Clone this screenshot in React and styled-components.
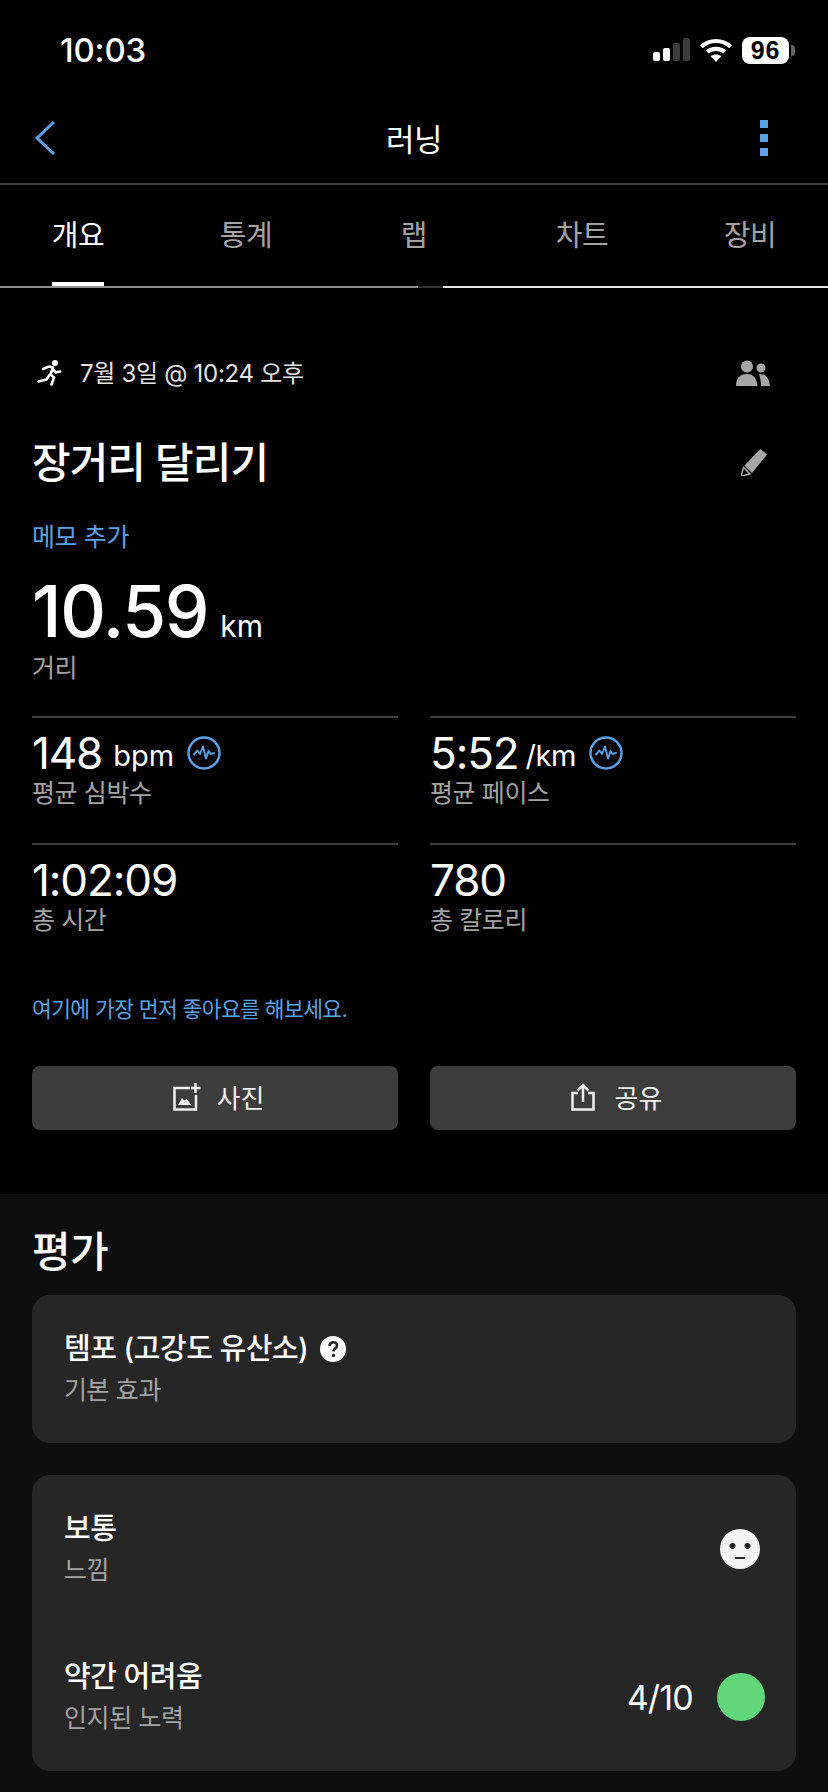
import React from 'react';
import styled, { createGlobalStyle } from 'styled-components';

const Global = createGlobalStyle`
  html, body { margin: 0; padding: 0; background: #000; }
  body { font-family: Inter, "Noto Sans CJK KR", sans-serif; color: #fff; }
  * { box-sizing: border-box; }
`;
const Page = styled.div`width: 828px; height: 1792px; overflow: hidden; background: #000;`;

const StatusBar = styled.div`
  height: 100px; display: flex; align-items: center; justify-content: space-between;
  padding: 0 39px 0 60px;
`;
const Clock = styled.div`font-size: 33px; font-weight: 500; letter-spacing: -0.2px; color: #fff;`;
const StatusIcons = styled.div`display: flex; align-items: center; gap: 9px;`;
const Battery = styled.div`
  position: relative; width: 47px; height: 27px; border-radius: 8px; background: #fff; color: #000;
  font-size: 25px; font-weight: 700; line-height: 27px; text-align: center; font-family: "Liberation Sans", sans-serif;
  letter-spacing: 0.8px;
  &::after { content: ""; position: absolute; right: -6px; top: 8px; width: 4px; height: 11px; border-radius: 0 4px 4px 0; background: #666; }
`;

const NavBar = styled.div`
  height: 85px; display: flex; align-items: center; justify-content: space-between;
  padding: 0 60px 8px; border-bottom: 2px solid #3e3e3e;
`;
const BackIcon = styled.svg`margin-left: -26px; margin-right: 26px;`;
const NavDots = styled.svg`margin-left: 14px;`;
const NavTitle = styled.div`font-size: 31px; font-weight: 400; letter-spacing: -0.5px; color: #fff;`;

const Tabs = styled.div`
  height: 103px; display: grid; grid-template-columns: repeat(5, 168px); margin-left: -6px; width: 840px;
  border-bottom: 2px solid; border-image: linear-gradient(90deg, #8f8f8f 0 50.500%, #333 50.500% 53.500%, #e6e6e6 53.500% 100%) 1;
`;
const Tab = styled.div`
  position: relative; justify-self: center; padding-top: 31px; height: 101px;
  font-size: 29px; line-height: 40px; letter-spacing: -0.4px;
  color: ${p => (p.$active ? '#fff' : '#a3a3a3')};
  ${p => p.$active && `&::after { content: ""; position: absolute; left: 0; right: 0; bottom: 0; height: 4px; background: #fff; }`}
`;

const Overview = styled.section`padding: 65px 32px 64px;`;
const DateRow = styled.div`height: 40px; display: flex; align-items: center; justify-content: space-between; padding-right: 26px;`;
const DateLabel = styled.div`display: flex; align-items: center; gap: 17px; font-size: 24px; letter-spacing: -0.3px; color: #e4e4e4;`;
const DateText = styled.span`margin-top: -4px;`;
const RunnerIcon = styled.svg`margin-left: 3px;`;
const TitleRow = styled.div`height: 56px; margin-top: 41px; display: flex; align-items: center; justify-content: space-between; padding-right: 29px;`;
const Title = styled.h1`margin: -6px 0 0; font-size: 42px; font-weight: 500; letter-spacing: -1px; color: #fff;`;
const Link = styled.div`
  font-size: ${p => p.$size}px; line-height: 34px; color: #5aa2e8; letter-spacing: ${p => p.$track}px; margin-top: ${p => p.$top}px;
`;
const BigValue = styled.div`display: flex; align-items: baseline; height: 70px; line-height: 70px; margin-top: 22px; gap: 12px;`;
const BigNumber = styled.span`font-size: 71px; font-weight: 500; letter-spacing: -1.3px;`;
const BigUnit = styled.span`font-size: 30px;`;
const Caption = styled.div`font-size: 25px; line-height: 32px; letter-spacing: -0.4px; color: #a3a3a3;`;
const BigCaption = styled(Caption)`margin-top: 5px; line-height: 34px;`;
const StatGrid = styled.div`display: grid; grid-template-columns: 366px 366px; column-gap: 32px; margin-top: 31px;`;
const Stat = styled.div`height: 127px; border-top: 2px solid #3e3e3e; padding-top: 11px;`;
const StatValue = styled.div`display: flex; align-items: center; height: 48px; line-height: 48px;`;
const StatNumber = styled.span`font-size: 44px; font-weight: 400; letter-spacing: -1.1px;`;
const StatUnit = styled.span`font-size: 29px; margin-left: ${p => p.$gap}px; margin-top: 6px; letter-spacing: ${p => p.$track}px;`;
const PulseIcon = styled.svg`width: 34px; height: 34px; margin-left: 13px; margin-top: 0;`;
const Buttons = styled.div`display: grid; grid-template-columns: 366px 366px; column-gap: 32px; margin-top: 40px;`;
const ActionButton = styled.div`
  height: 64px; border-radius: 8px; background: #3c3c3c; display: flex; align-items: center; justify-content: center;
  gap: ${p => p.$gap}px; font-size: 26px; color: #f0f0f0; padding: 0 0 3px 7px;
`;

const Rating = styled.section`background: #0e0e0e; padding: 33px 32px 0; height: 598px;`;
const Heading = styled.h2`margin: 0 0 18px; height: 50px; line-height: 50px; font-size: 42px; font-weight: 500; letter-spacing: -0.6px;`;
const Card = styled.div`background: #262626; border-radius: 18px; margin-bottom: 32px; padding: 0 32px;`;
const Row = styled.div`height: 148px; display: flex; align-items: center; justify-content: space-between;`;
const TextBlock = styled.div`padding-bottom: 2px;`;
const RowTitle = styled.div`display: flex; align-items: center; gap: 12px; font-size: 29px; line-height: 36px; font-weight: 500; letter-spacing: -0.5px; margin-bottom: 7px; color: #fff;`;
const RowRight = styled.div`display: flex; align-items: center; gap: 24px;`;
const Score = styled.div`font-size: 34px; letter-spacing: -0.8px;`;
const Dot = styled.div`width: 48px; height: 48px; border-radius: 50%; background: #62d67b; margin-right: -1px;`;
const FaceIcon = styled.svg`margin-right: 4px;`;

const Pulse = () => (
  <PulseIcon viewBox="0 0 34 34" fill="none" stroke="#5aa2e8">
    <circle cx="17" cy="17" r="15.5" strokeWidth="2.4" />
    <path d="M7 18.500l3.500-4 2.500 3.500 3-7.500 3 12 2.500-7.500 2 3 3.500-1" strokeWidth="1.9" strokeLinejoin="round" strokeLinecap="round" />
  </PulseIcon>
);

export default function App() {
  return (
    <Page>
      <Global />
      <StatusBar>
        <Clock>10:03</Clock>
        <StatusIcons>
          <svg width="37" height="24" viewBox="0 0 37 24">
            <rect x="0" y="14" width="7" height="9" rx="2" fill="#fff" />
            <rect x="10" y="10" width="7" height="13" rx="2" fill="#fff" />
            <rect x="20" y="5" width="7" height="18" rx="2" fill="#3c3c3c" />
            <rect x="30" y="0" width="7" height="23" rx="2" fill="#3c3c3c" />
          </svg>
          <svg width="34" height="25" viewBox="0 0 32 24" fill="none" stroke="#fff" strokeWidth="4">
            <path d="M2 8.500C10 1 22 1 30 8.500" />
            <path d="M7.500 13.500C12 9.500 20 9.500 24.500 13.500" />
            <path d="M16 23l-5.200-5.400c3-2.400 7.400-2.400 10.400 0z" fill="#fff" stroke="none" />
          </svg>
          <Battery>96</Battery>
        </StatusIcons>
      </StatusBar>
      <NavBar>
        <BackIcon width="22" height="36" viewBox="0 0 22 36" fill="none" stroke="#5aa2e8" strokeWidth="3"><path d="M20 2L3 18l17 16" /></BackIcon>
        <NavTitle>러닝</NavTitle>
        <NavDots width="8" height="36" viewBox="0 0 8 36" fill="#5aa2e8"><rect width="8" height="8" /><rect y="14" width="8" height="8" /><rect y="28" width="8" height="8" /></NavDots>
      </NavBar>
      <Tabs>
        <Tab $active>개요</Tab>
        <Tab>통계</Tab>
        <Tab>랩</Tab>
        <Tab>차트</Tab>
        <Tab>장비</Tab>
      </Tabs>
      <Overview>
        <DateRow>
          <DateLabel>
            <RunnerIcon width="28" height="28" viewBox="0 0 28 28" fill="none" stroke="#fff" strokeWidth="2.600" strokeLinejoin="round" strokeLinecap="round">
              <circle cx="20" cy="4" r="3" fill="#fff" stroke="none" />
              <path d="M8 10l6-2.500 4 1-2.500 7 3.500 3-2.500 7" />
              <path d="M18 10l2.500 3.500 4.500-1" />
              <path d="M14.500 16l-3 4.500-8 2" />
            </RunnerIcon>
            <DateText>7월 3일 @ 10:24 오후</DateText>
          </DateLabel>
          <svg width="34" height="26" viewBox="0 0 34 26" fill="#a6a6a6">
            <circle cx="11" cy="6.500" r="6" /><circle cx="25" cy="8" r="4.500" />
            <path d="M0 26c0-8 4-12 11-12s10 5 10.500 12zM23 14.500c6-1.500 10 3 11 11.500H25c0-5-1-9-2-11.500z" />
          </svg>
        </DateRow>
        <TitleRow>
          <Title>장거리 달리기</Title>
          <svg width="26" height="27" viewBox="0 0 26 27" fill="#a6a6a6">
            <path d="M19.500 0L26 5.500 11 24 3.500 16.500z" />
            <path d="M2.500 18.500L9 25l-9 2z" fill="none" stroke="#a6a6a6" strokeWidth="1.600" />
          </svg>
        </TitleRow>
        <Link $size={25} $track={-0.4} $top={30}>메모 추가</Link>
        <BigValue><BigNumber>10.59</BigNumber><BigUnit>km</BigUnit></BigValue>
        <BigCaption>거리</BigCaption>
        <StatGrid>
          <Stat>
            <StatValue><StatNumber>148</StatNumber><StatUnit $gap={11} $track={0}>bpm</StatUnit><Pulse /></StatValue>
            <Caption>평균 심박수</Caption>
          </Stat>
          <Stat>
            <StatValue><StatNumber>5:52</StatNumber><StatUnit $gap={7} $track={-0.5}>/km</StatUnit><Pulse /></StatValue>
            <Caption>평균 페이스</Caption>
          </Stat>
          <Stat>
            <StatValue><StatNumber>1:02:09</StatNumber></StatValue>
            <Caption>총 시간</Caption>
          </Stat>
          <Stat>
            <StatValue><StatNumber>780</StatNumber></StatValue>
            <Caption>총 칼로리</Caption>
          </Stat>
        </StatGrid>
        <Link $size={21.5} $track={-0.6} $top={22}>여기에 가장 먼저 좋아요를 해보세요.</Link>
        <Buttons>
          <ActionButton $gap={16}>
            <svg width="28" height="28" viewBox="0 0 28 28" fill="none" stroke="#f0f0f0" strokeWidth="2.500">
              <path d="M17 5H1.500v21.500H23V12" />
              <path d="M22.500 0v10M17.500 5h10" />
              <path d="M5 22l4-7 2.500 2.500 2-1.500 5 6z" fill="#f0f0f0" stroke="none" />
            </svg>
            사진
          </ActionButton>
          <ActionButton $gap={20}>
            <svg width="24" height="28" viewBox="0 0 24 28" fill="none" stroke="#f0f0f0" strokeWidth="2.500">
              <path d="M7 10H1.500v16.500h21V10H17" />
              <path d="M12 19V2M6.500 7.500L12 2l5.500 5.500" />
            </svg>
            공유
          </ActionButton>
        </Buttons>
      </Overview>
      <Rating>
        <Heading>평가</Heading>
        <Card>
          <Row>
            <TextBlock>
              <RowTitle>
                템포 (고강도 유산소)
                <svg width="26" height="26" viewBox="0 0 26 26">
                  <circle cx="13" cy="13" r="13" fill="#fff" />
                  <path d="M9.500 10c0-5 7.500-5 7.500-.5 0 3-3.500 3-3.500 6" fill="none" stroke="#262626" strokeWidth="2.600" />
                  <circle cx="13.500" cy="19.500" r="1.700" fill="#262626" />
                </svg>
              </RowTitle>
              <Caption>기본 효과</Caption>
            </TextBlock>
          </Row>
        </Card>
        <Card>
          <Row>
            <TextBlock>
              <RowTitle>보통</RowTitle>
              <Caption>느낌</Caption>
            </TextBlock>
            <FaceIcon width="40" height="40" viewBox="0 0 40 40">
              <circle cx="20" cy="20" r="20" fill="#f4f4f4" />
              <circle cx="12.500" cy="17" r="3" fill="#262626" />
              <circle cx="27.500" cy="17" r="3" fill="#262626" />
              <rect x="14.500" y="28" width="11" height="2" rx="1" fill="#262626" />
            </FaceIcon>
          </Row>
          <Row>
            <TextBlock>
              <RowTitle>약간 어려움</RowTitle>
              <Caption>인지된 노력</Caption>
            </TextBlock>
            <RowRight>
              <Score>4/10</Score>
              <Dot />
            </RowRight>
          </Row>
        </Card>
      </Rating>
    </Page>
  );
}
